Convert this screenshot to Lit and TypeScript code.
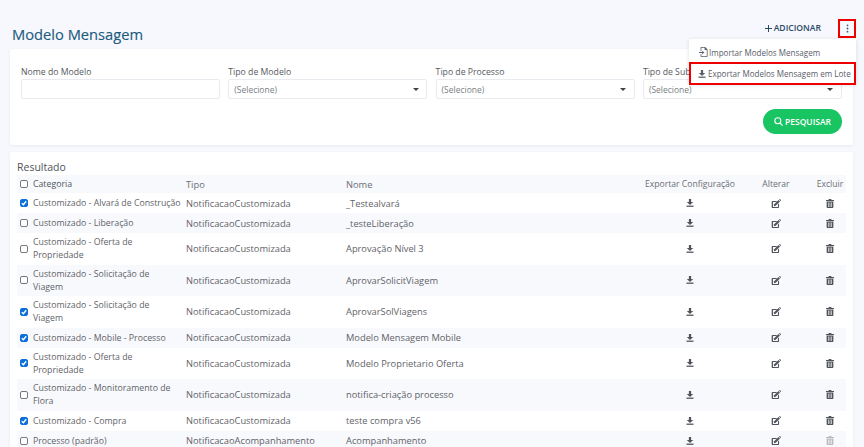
import { LitElement, html, css, svg } from "lit";
import { customElement } from "lit/decorators.js";

type Row = { c: boolean; cat: string; tipo: string; nome: string; tall: boolean; off?: boolean };
const T1 = "NotificacaoCustomizada";
const rows: Row[] = [
  { c: true, cat: "Customizado - Alvará de Construção", tipo: T1, nome: "_Testealvará", tall: false },
  { c: false, cat: "Customizado - Liberação", tipo: T1, nome: "_testeLiberação", tall: false },
  { c: false, cat: "Customizado - Oferta de\nPropriedade", tipo: T1, nome: "Aprovação Nível 3", tall: true },
  { c: false, cat: "Customizado - Solicitação de\nViagem", tipo: T1, nome: "AprovarSolicitViagem", tall: true },
  { c: true, cat: "Customizado - Solicitação de\nViagem", tipo: T1, nome: "AprovarSolViagens", tall: true },
  { c: true, cat: "Customizado - Mobile - Processo", tipo: T1, nome: "Modelo Mensagem Mobile", tall: false },
  { c: true, cat: "Customizado - Oferta de\nPropriedade", tipo: T1, nome: "Modelo Proprietario Oferta", tall: true },
  { c: false, cat: "Customizado - Monitoramento de\nFlora", tipo: T1, nome: "notifica-criação processo", tall: true },
  { c: true, cat: "Customizado - Compra", tipo: T1, nome: "teste compra v56", tall: false },
  { c: false, cat: "Processo (padrão)", tipo: "NotificacaoAcompanhamento", nome: "Acompanhamento", tall: false, off: true },
];

const dl = svg`<path d="M3.6 0h2.8v3.6H9L5 7.4 1 3.6h2.6z"/><rect x="0.6" y="8.2" width="8.8" height="1.6"/>`;
const edit = svg`<path d="M1.6 2.2h5.6L5.9 3.5H2.2v5.8h5.8V6.4l1.3-1.3v4.5c0 .5-.4.9-.9.9H1.6c-.5 0-.9-.4-.9-.9V3.1c0-.5.4-.9.9-.9z"/><path d="M3.6 6.2 8.7 1.2l1.7 1.7-5 5.1-2.2.4z"/><path d="M9.3.6l.5-.4c.2-.2.5-.2.7 0l1 1c.2.2.2.5 0 .7l-.5.5z"/>`;
const trash = svg`<path d="M3.2 0h2.6l.5 1H9v1.1H0V1h2.7z"/><path fill-rule="evenodd" d="M.7 2.8h7.6v6.4c0 .5-.4.8-.8.8H1.5c-.4 0-.8-.3-.8-.8zM2.4 4v4.8h.7V4zM4.15 4v4.8h.7V4zM5.9 4v4.8h.7V4z"/>`;

@customElement("app-root")
export class AppRoot extends LitElement {
  static styles = css`
    :host {
      display: block;
      width: 864px;
      height: 447px;
      overflow: hidden;
      position: relative;
      background: #f7f8fd;
      font-family: "Open Sans", sans-serif;
      font-size: 9.3px;
      color: #5f6368;
    }
    .top {
      height: 49px;
      box-sizing: border-box;
      display: flex;
      align-items: flex-start;
      justify-content: space-between;
      padding: 19px 8px 0 12px;
    }
    h1 {
      margin: 6px 0 0;
      font-size: 14.7px;
      line-height: 18px;
      font-weight: 400;
      color: #1c5b7e;
      -webkit-text-stroke: 0.15px #1c5b7e;
    }
    .actions {
      display: flex;
      align-items: flex-start;
      gap: 17px;
    }
    .add {
      font-size: 8.6px;
      font-weight: 600;
      line-height: 18px;
      color: #2b4a66;
      display: flex;
      align-items: center;
      gap: 2px;
    }
    .add svg {
      fill: #2b4a66;
    }
    .kebab {
      width: 18px;
      height: 19px;
      box-sizing: border-box;
      border: 2px solid #ee0000;
      display: flex;
      align-items: center;
      justify-content: center;
    }
    .kebab svg {
      fill: #4a5a6a;
    }
    .menu {
      position: absolute;
      left: 689px;
      top: 39px;
      width: 167px;
      height: 45px;
      box-sizing: border-box;
      background: #fff;
      box-shadow: 0 1px 4px rgba(60, 70, 100, 0.18);
      font-size: 8.05px;
      color: #5a6068;
      z-index: 2;
    }
    .mi {
      height: 23px;
      display: flex;
      align-items: center;
      padding: 3px 0 0 10px;
      gap: 1px;
      white-space: nowrap;
      box-sizing: border-box;
    }
    .mi.red {
      border: 2px solid #ee0000;
      padding: 0 0 0 7px;
      gap: 2px;
    }
    .mi svg {
      fill: #5a6068;
      flex: none;
    }
    .card {
      background: #fff;
      margin: 0 11px 0 10px;
      border-radius: 2px;
      box-shadow: 0 1px 3px rgba(70, 80, 120, 0.08);
    }
    .filters {
      height: 96px;
      box-sizing: border-box;
      padding: 17px 11px 0 11px;
      margin-bottom: 7px;
    }
    .grid {
      display: grid;
      grid-template-columns: repeat(4, 199px);
      column-gap: 8.3px;
    }
    label {
      display: block;
      font-size: 8.7px;
      line-height: 12px;
      color: #555a60;
      margin-bottom: 1px;
      white-space: nowrap;
    }
    .field {
      height: 20px;
      box-sizing: border-box;
      border: 1px solid #e9ebf1;
      border-radius: 2px;
      background: #fff;
      padding-left: 5px;
      display: flex;
      align-items: center;
      justify-content: space-between;
      padding-right: 7.5px;
      font-size: 8.5px;
      color: #7b7f85;
    }
    .arrow {
      width: 0;
      height: 0;
      border-left: 3.5px solid transparent;
      border-right: 3.5px solid transparent;
      border-top: 3.5px solid #3d4148;
    }
    .btnrow {
      display: flex;
      justify-content: flex-end;
      margin-top: 10px;
    }
    .btn {
      width: 79px;
      height: 25px;
      border-radius: 13px;
      background: #19c463;
      color: #fff;
      font-weight: 600;
      font-size: 8.5px;
      display: flex;
      align-items: center;
      justify-content: center;
      gap: 2px;
    }
    .btn svg {
      fill: none;
      stroke: #fff;
      stroke-width: 1.1;
    }
    .result {
      padding: 8px 7px 0 7px;
      height: 300px;
    }
    .rt {
      font-size: 10.5px;
      line-height: 15px;
      color: #4f545a;
    }
    .row {
      display: grid;
      grid-template-columns: 169px 160px 296px 96px 76px 32px;
      align-items: center;
      height: 20px;
    }
    .row.tall {
      height: 31.5px;
    }
    .row.head {
      height: 18px;
      background: #f8f9fd;
      color: #6a6e74;
    }
    .row.head .cat {
      color: #50555b;
    }
    .row:nth-child(odd):not(.head) {
      background: #f8f9fd;
    }
    .cat {
      display: flex;
      align-items: center;
      line-height: 13px;
      font-size: 8.75px;
    }
    .cat span.t {
      white-space: pre;
      padding-top: 1px;
    }
    .cb {
      width: 8px;
      height: 8px;
      margin: 0 5px 0 3px;
      flex: none;
      box-sizing: border-box;
      border: 1px solid #77797d;
      border-radius: 2px;
      background: #fff;
      display: flex;
    }
    .cb.on {
      background: #0d6fdc;
      border-color: #0d6fdc;
    }
    .cb svg {
      fill: none;
      stroke: #fff;
      stroke-width: 1.4;
    }
    .ctr {
      display: flex;
      justify-content: center;
      white-space: nowrap;
      font-size: 8.6px;
    }
    .ic {
      fill: #50545a;
    }
    .ic.off {
      fill: #b9bbbf;
    }
  `;

  private check(on: boolean) {
    return html`<span class="cb ${on ? "on" : ""}">
      ${on
        ? html`<svg width="6" height="6" viewBox="0 0 6 6"><path d="M.8 3.2 2.4 4.8 5.2 1.2" /></svg>`
        : ""}
    </span>`;
  }

  private select(name: string) {
    return html`<div>
      <label>${name}</label>
      <div class="field"><span>(Selecione)</span><span class="arrow"></span></div>
    </div>`;
  }

  render() {
    return html`
      <div class="top">
        <h1>Modelo Mensagem</h1>
        <div class="actions">
          <div class="add">
            <svg width="7" height="7" viewBox="0 0 7 7"><path d="M3 0h1v3h3v1H4v3H3V4H0V3h3z" /></svg>
            ADICIONAR
          </div>
          <div class="kebab">
            <svg width="3" height="9" viewBox="0 0 3 9">
              <circle cx="1.5" cy="1.3" r=".9" /><circle cx="1.5" cy="4.5" r=".9" /><circle cx="1.5" cy="7.7" r=".9" />
            </svg>
          </div>
        </div>
      </div>
      <div class="menu">
        <div class="mi">
          <svg width="9" height="10" viewBox="0 0 9 10">
            <path
              fill-rule="evenodd"
              d="M2 0h4.2L8.6 2.4V9c0 .5-.3 1-.8 1H2.4c-.5 0-.8-.5-.8-1V7h.8v2.2h5.4V3H5.6V.8H2.4V4h-.8V.8C1.6.4 1.6 0 2 0zM0 5h3.2V3.8L5.4 5.5 3.2 7.2V6H0z"
            />
          </svg>
          Importar Modelos Mensagem
        </div>
        <div class="mi red">
          <svg width="8" height="8" viewBox="0 0 10 10">${dl}</svg>
          Exportar Modelos Mensagem em Lote
        </div>
      </div>
      <section class="card filters">
        <div class="grid">
          <div>
            <label>Nome do Modelo</label>
            <div class="field"></div>
          </div>
          ${this.select("Tipo de Modelo")} ${this.select("Tipo de Processo")} ${this.select("Tipo de Subprocesso")}
        </div>
        <div class="btnrow">
          <div class="btn">
            <svg width="9" height="9" viewBox="0 0 9 9"><circle cx="3.8" cy="3.8" r="3" /><path d="M6 6l2.6 2.6" /></svg>
            PESQUISAR
          </div>
        </div>
      </section>
      <section class="card result">
        <div class="rt">Resultado</div>
        <div>
          <div class="row head">
            <div class="cat">${this.check(false)}<span class="t">Categoria</span></div>
            <div>Tipo</div>
            <div>Nome</div>
            <div class="ctr">Exportar Configuração</div>
            <div class="ctr">Alterar</div>
            <div class="ctr">Excluir</div>
          </div>
          ${rows.map(
            (r) => html`<div class="row ${r.tall ? "tall" : ""}">
              <div class="cat">${this.check(r.c)}<span class="t">${r.cat}</span></div>
              <div>${r.tipo}</div>
              <div>${r.nome}</div>
              <div class="ctr"><svg class="ic" width="8" height="8" viewBox="0 0 10 10">${dl}</svg></div>
              <div class="ctr"><svg class="ic" width="10" height="9" viewBox="0 0 11.5 10.5">${edit}</svg></div>
              <div class="ctr"><svg class="ic ${r.off ? "off" : ""}" width="8" height="9" viewBox="0 0 9 10">${trash}</svg></div>
            </div>`
          )}
        </div>
      </section>
    `;
  }
}
